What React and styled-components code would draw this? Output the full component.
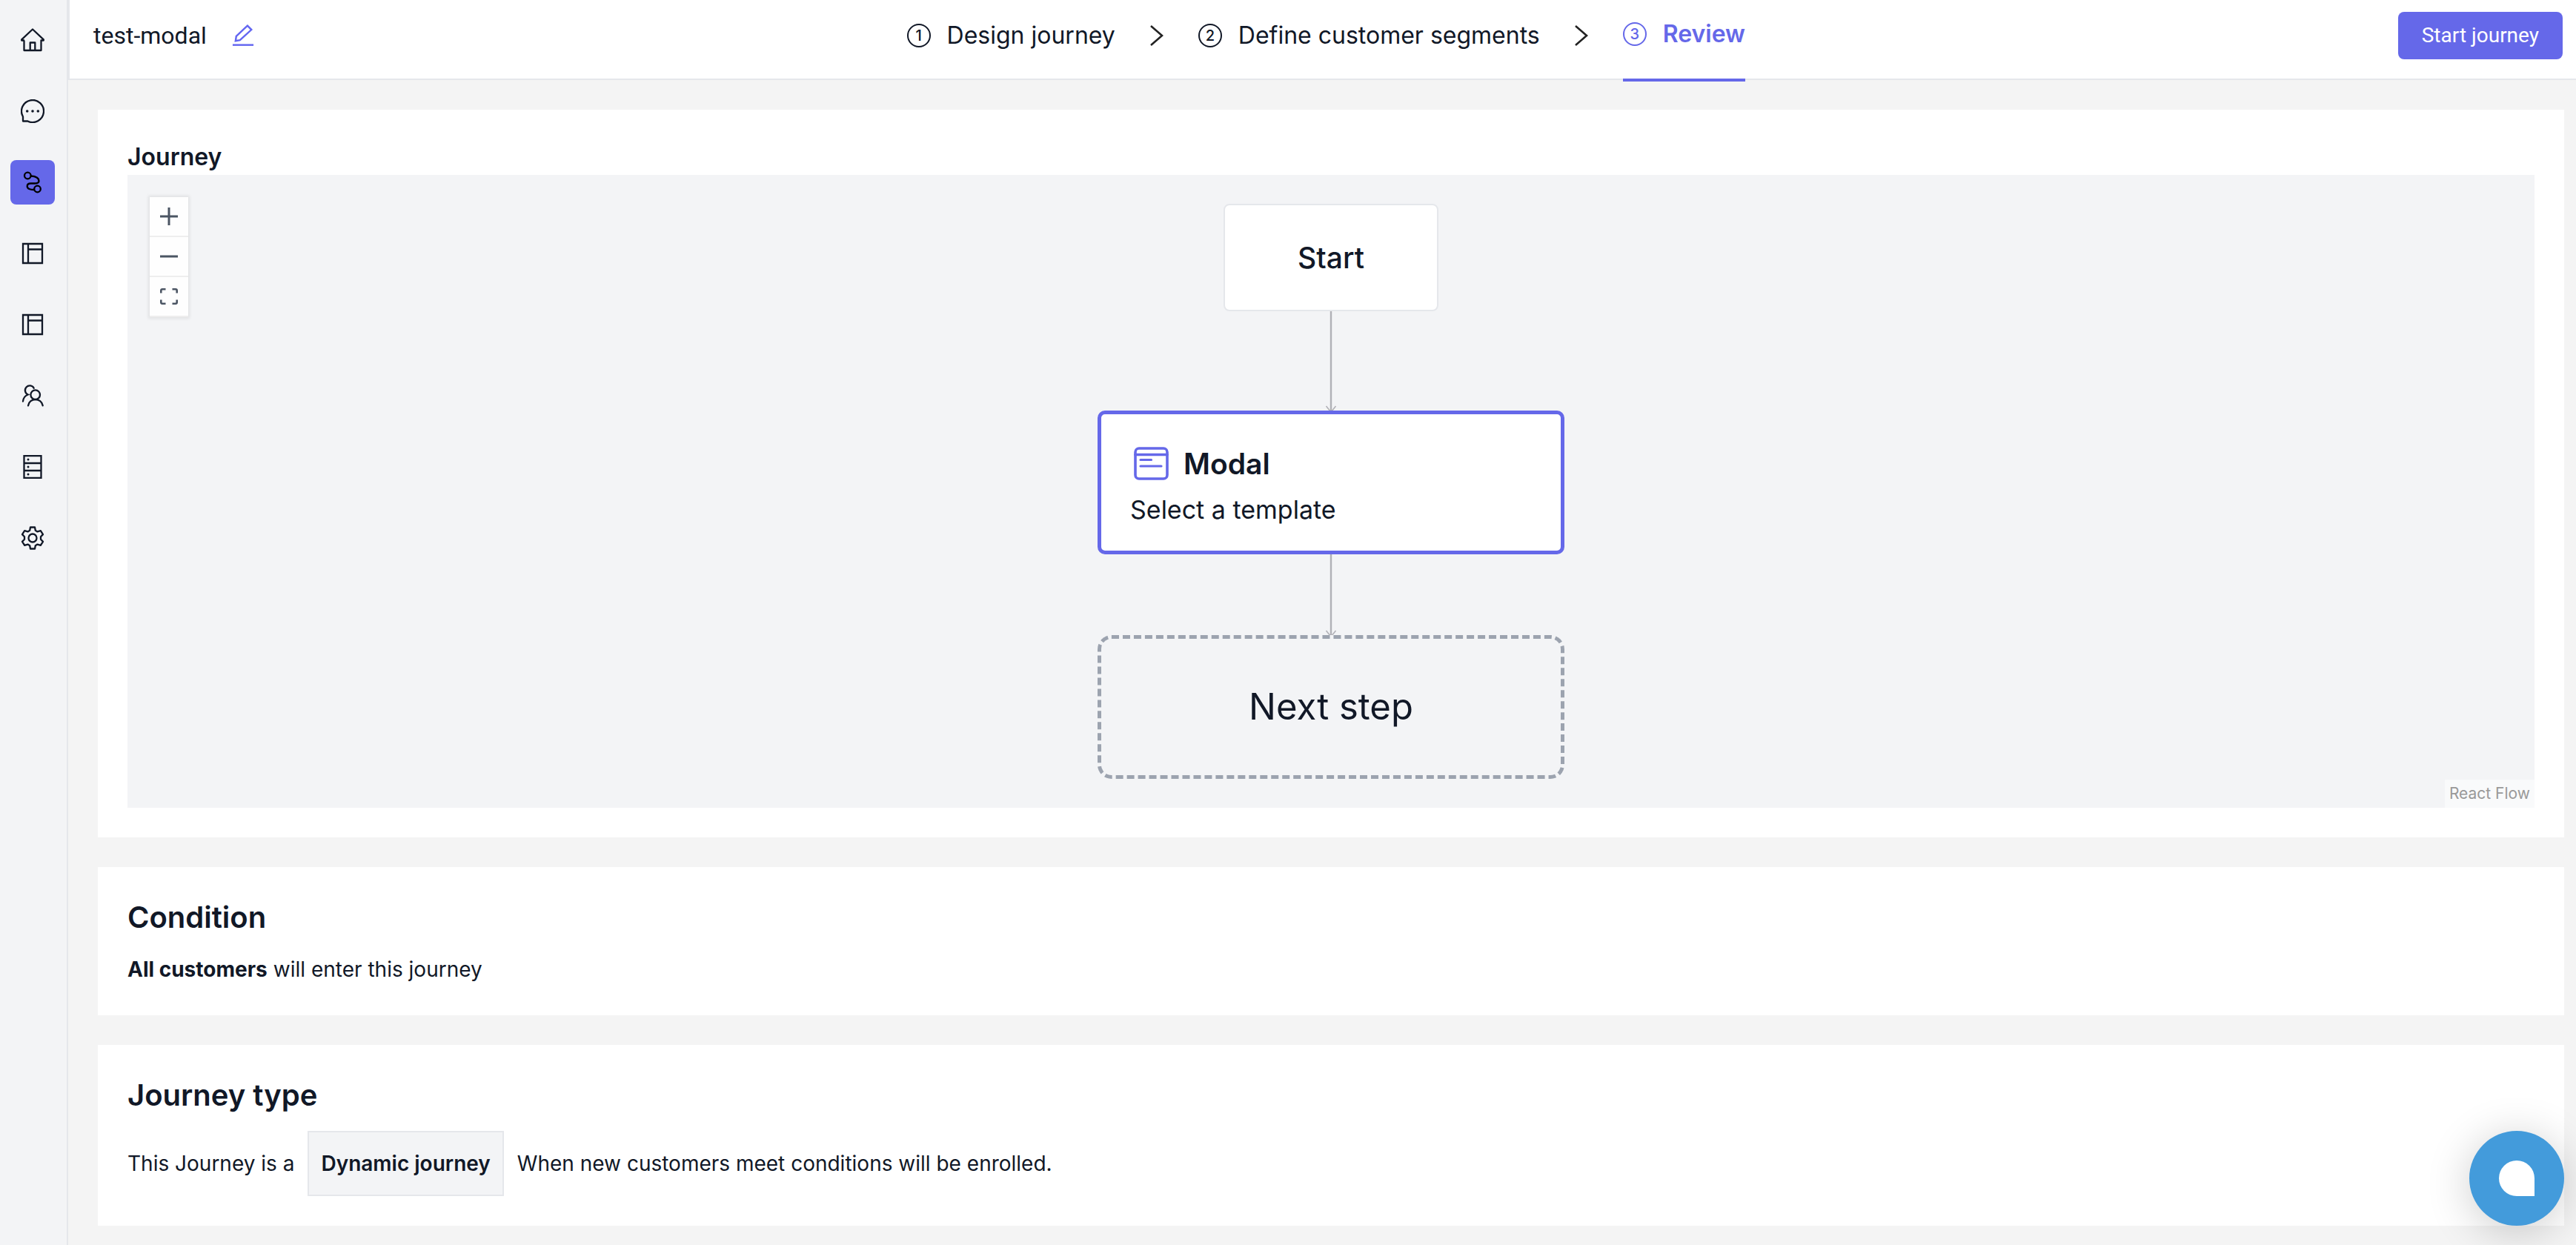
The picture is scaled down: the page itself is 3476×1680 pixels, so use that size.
import React from "react";
import styled, { createGlobalStyle, css } from "styled-components";

const ink = "#111827";
const line = "#e5e7eb";
const accent = "#6366f1";
const brand = "#6568e9";
const mist = "#f3f4f6";

const GlobalStyle = createGlobalStyle`
  *, *::before, *::after { box-sizing: border-box; }
  body {
    margin: 0;
    background: #f4f4f4;
    color: ${ink};
    font-family: Inter, "Liberation Sans", sans-serif;
    font-size: 28px;
    line-height: 44px;
  }
  h1, h2, p, ol { margin: 0; padding: 0; font-weight: inherit; }
  button { font: inherit; color: inherit; border: 0; padding: 0; background: none; cursor: pointer; }
  a { color: inherit; text-decoration: none; }
  svg { display: block; }
`;

const Shell = styled.div`
  display: flex;
  min-height: 100vh;
`;

const Sidebar = styled.nav`
  display: flex;
  flex-direction: column;
  align-items: center;
  gap: 36px;
  width: 92px;
  padding: 24px 2px 24px 0;
  background: ${mist};
  border-right: 2px solid ${line};
`;

const NavLink = styled.a`
  display: grid;
  place-items: center;
  width: 60px;
  height: 60px;
  border-radius: 8px;
  ${(p) => p.$active && css`background: ${brand}; color: #000;`}
`;

const Page = styled.div`
  flex: 1;
  min-width: 0;
`;

const Header = styled.header`
  display: flex;
  justify-content: space-between;
  height: 108px;
  padding: 16px 18px 0 32px;
  background: #fff;
  border-left: 2px solid ${line};
  border-bottom: 2px solid ${line};
`;

const TitleGroup = styled.div`
  display: flex;
  align-items: center;
  gap: 34px;
  height: 64px;
`;

const JourneyName = styled.h1`
  font: 400 32px/48px Roboto, sans-serif;
`;

const EditButton = styled.button`
  color: ${accent};
`;

const Steps = styled.ol`
  display: flex;
  gap: 47px;
  list-style: none;
  font-size: 32px;
  line-height: 48px;
`;

const StepItem = styled.li`
  display: flex;
  gap: 47px;
  height: 94px;
`;

const StepButton = styled.button`
  display: flex;
  align-items: center;
  gap: 22px;
  height: 64px;
  ${(p) =>
    p.$current &&
    css`
      height: 94px;
      padding-bottom: 30px;
      border-bottom: 4px solid ${brand};
      color: ${brand};
      font-weight: 600;
    `}
`;

const StepNumber = styled.span`
  display: grid;
  place-items: center;
  width: 32px;
  height: 32px;
  border: 2px solid currentColor;
  border-radius: 50%;
  font-size: 20px;
  font-weight: 500;
  line-height: 28px;
`;

const Separator = styled.span`
  display: flex;
  align-items: center;
  height: 64px;
`;

const PrimaryButton = styled.button`
  height: 64px;
  padding: 0 32px;
  border-radius: 8px;
  background: ${brand};
  color: #fff;
  font: 400 28px/40px Roboto, sans-serif;
`;

const Main = styled.main`
  display: flex;
  flex-direction: column;
  gap: 40px;
  padding: 40px 16px 26px 40px;
`;

const Panel = styled.section`
  display: flex;
  flex-direction: column;
  gap: ${(p) => (p.$flush ? "0" : "20px")};
  padding: 40px;
  background: #fff;
`;

const PanelTitle = styled.h2`
  font-weight: 600;
  font-size: ${(p) => (p.$small ? "32px" : "40px")};
  line-height: ${(p) => (p.$small ? "48px" : "56px")};
`;

const Sentence = styled.p`
  display: flex;
  align-items: center;
  gap: ${(p) => (p.$wide ? "18px" : "8px")};
`;

const Tag = styled.strong`
  padding: 20px 16px;
  border: 2px solid ${line};
  background: ${mist};
  font-weight: 600;
`;

const Canvas = styled.div`
  position: relative;
  display: flex;
  flex-direction: column;
  align-items: center;
  padding: 39px 0;
  background: ${mist};
`;

const Controls = styled.div`
  position: absolute;
  top: 30px;
  left: 30px;
  box-shadow: 0 0 4px 2px rgba(0, 0, 0, 0.08);
`;

const ControlButton = styled.button`
  display: grid;
  place-items: center;
  width: 52px;
  height: 54px;
  background: #fefefe;
  border-bottom: 2px solid #eee;
  color: #4b5563;
`;

const Attribution = styled.a`
  position: absolute;
  right: 0;
  bottom: 0;
  padding: 4px 6px;
  background: rgba(255, 255, 255, 0.5);
  color: #999;
  font-size: 21px;
  line-height: 30px;
`;

const StartNode = styled.div`
  display: grid;
  place-items: center;
  width: 290px;
  height: 145px;
  border: 2px solid ${line};
  border-radius: 8px;
  background: #fff;
  font-size: 39px;
  font-weight: 500;
`;

const StepNode = styled.div`
  display: flex;
  flex-direction: column;
  justify-content: center;
  gap: 8px;
  width: 630px;
  height: 194px;
  padding: 12px 39px 0;
  border: 5px solid ${brand};
  border-radius: 10px;
  background: #fff;
  font-size: 34px;
  line-height: 54px;
`;

const NodeTitle = styled.div`
  display: flex;
  align-items: center;
  gap: 16px;
  font-size: 39px;
  font-weight: 600;
`;

const NextNode = styled.div`
  display: grid;
  place-items: center;
  width: 630px;
  height: 194px;
  border: 5px dashed #9ca3af;
  border-radius: 19px;
  font-size: 49px;
`;

const ChatButton = styled.button`
  position: fixed;
  right: 16px;
  bottom: 26px;
  display: grid;
  place-items: center;
  width: 128px;
  height: 128px;
  border-radius: 50%;
  background: #439bdb;
  box-shadow: 0 8px 60px rgba(0, 0, 0, 0.2);
`;

const ChatBubble = styled.span`
  width: 48px;
  height: 48px;
  border-radius: 50% 50% 0 50%;
  background: #fff;
`;

const Icon = ({ size = 32, children, ...rest }) => (
  <svg width={size} height={size} viewBox="0 0 32 32" fill="none" stroke="currentColor" strokeWidth="2.3" aria-hidden="true" {...rest}>
    {children}
  </svg>
);

const HomeIcon = () => (
  <Icon strokeLinejoin="round">
    <path d="M5 16.500H1.200v-1.200L16 1.500l14.800 13.800v1.200H27.500V30H4.500V16.500M12.700 30V19.500h6.600V30" />
  </Icon>
);
const ChatIcon = () => (
  <Icon>
    <path d="M3 29.500V23.500A15 15 0 1 1 9.400 29.500Z" strokeLinejoin="round" />
    <g fill="currentColor" stroke="none">
      <circle cx="8.700" cy="16" r="1.800" />
      <circle cx="16" cy="16" r="1.800" />
      <circle cx="23.300" cy="16" r="1.800" />
    </g>
  </Icon>
);
const RouteIcon = () => (
  <Icon>
    <circle cx="9.300" cy="7" r="4.300" />
    <circle cx="22.500" cy="25" r="4.300" />
    <path d="M13.800 7.500C20.500 8 24.500 10.500 24.500 14.200c0 2.500-2 3.300-6 3.300h-5c-3.300 0-4.800 1.200-4.800 3.700 0 3.200 3.500 4.800 9.300 4.800" />
  </Icon>
);
const LayoutIcon = () => (
  <Icon>
    <path d="M3 3h26v26H3zM10 3v26M10 10.500h19" />
  </Icon>
);
const UsersIcon = () => (
  <Icon strokeLinecap="round">
    <circle cx="19.700" cy="14.700" r="6.300" />
    <path d="M10 29.300c1.500-11 18-11 19.700 0M17.700 5.700A6.300 6.300 0 1 0 9.700 14.500C6 16 3.400 19 3 23.500" />
  </Icon>
);
const DatabaseIcon = () => (
  <Icon>
    <path d="M4.500 1.200h23v29.600h-23zM4.500 11h23M4.500 21h23" />
    <g fill="currentColor" stroke="none">
      <circle cx="10" cy="6" r="1.500" />
      <circle cx="10" cy="16" r="1.500" />
      <circle cx="10" cy="26" r="1.500" />
    </g>
  </Icon>
);
const GearIcon = () => (
  <Icon strokeLinejoin="round">
    <circle cx="16" cy="16" r="5.500" />
    <path d="M13 1.500h6l.8 4.300 2.700 1.600 4.300-1.300 3.200 5-3 3.200v3.400l3 3.200-3.200 5-4.300-1.300-2.700 1.600-.8 4.300h-6l-.8-4.300-2.700-1.600-4.300 1.300-3.200-5 3-3.200v-3.400l-3-3.200 3.200-5 4.300 1.300 2.700-1.600z" />
  </Icon>
);
const PencilIcon = () => (
  <Icon size={30} strokeWidth="2.600">
    <path d="M1 29.500h30" />
    <path d="M22.300 1.800l5.700 5.700L11.500 22.500l-6.300 1.300 1-6.800z" />
  </Icon>
);
const ModalIcon = () => (
  <svg width="56" height="48" viewBox="0 0 56 48" fill="none" stroke={brand} strokeWidth="3.600" strokeLinecap="round" aria-hidden="true">
    <rect x="7" y="3" width="43" height="41" rx="5" />
    <path d="M7 11.500h43" />
    <path d="M14 18.500h14.500M14 27h28" strokeWidth="3.200" />
  </svg>
);
const ChevronIcon = () => (
  <svg width="18" height="28" viewBox="0 0 18 28" fill="none" stroke="#222" strokeWidth="2.600" aria-hidden="true">
    <path d="M1 1l15 13L1 27" />
  </svg>
);
const Edge = ({ length }) => (
  <svg width="16" height={length} viewBox={`0 0 16 ${length}`} fill="none" stroke="#b1b1b7" aria-hidden="true">
    <path d={`M8 0v${length}`} strokeWidth="2.400" />
    <path d={`M1.500 ${length - 6}L8 ${length + 2}L14.500 ${length - 6}`} strokeWidth="1.600" />
  </svg>
);

const navItems = [
  ["Home", HomeIcon],
  ["Messages", ChatIcon],
  ["Journeys", RouteIcon],
  ["Templates", LayoutIcon],
  ["Trackers", LayoutIcon],
  ["People", UsersIcon],
  ["Events", DatabaseIcon],
  ["Settings", GearIcon],
];

const steps = ["Design journey", "Define customer segments", "Review"];
const currentStep = 2;

export default function App() {
  return (
    <>
      <GlobalStyle />
      <Shell>
        <Sidebar aria-label="Main">
          {navItems.map(([label, Glyph]) => (
            <NavLink key={label} href="#" aria-label={label} $active={label === "Journeys"}>
              <Glyph />
            </NavLink>
          ))}
        </Sidebar>
        <Page>
          <Header>
            <TitleGroup>
              <JourneyName>test-modal</JourneyName>
              <EditButton type="button" aria-label="Rename journey">
                <PencilIcon />
              </EditButton>
            </TitleGroup>
            <Steps>
              {steps.map((step, i) => (
                <StepItem key={step}>
                  <StepButton type="button" $current={i === currentStep}>
                    <StepNumber>{i + 1}</StepNumber>
                    {step}
                  </StepButton>
                  {i < steps.length - 1 && (
                    <Separator>
                      <ChevronIcon />
                    </Separator>
                  )}
                </StepItem>
              ))}
            </Steps>
            <PrimaryButton type="button">Start journey</PrimaryButton>
          </Header>
          <Main>
            <Panel $flush>
              <PanelTitle $small>Journey</PanelTitle>
              <Canvas>
                <Controls>
                  <ControlButton type="button" aria-label="Zoom in">
                    <svg width="24" height="24" viewBox="0 0 24 24" stroke="currentColor" strokeWidth="3">
                      <path d="M12 0v24M0 12h24" />
                    </svg>
                  </ControlButton>
                  <ControlButton type="button" aria-label="Zoom out">
                    <svg width="24" height="24" viewBox="0 0 24 24" stroke="currentColor" strokeWidth="3">
                      <path d="M0 12h24" />
                    </svg>
                  </ControlButton>
                  <ControlButton type="button" aria-label="Fit view">
                    <svg width="24" height="24" viewBox="0 0 24 24" fill="none" stroke="currentColor" strokeWidth="2.600">
                      <path d="M1.300 7.500V4q0-1.700 1.700-1.700h4.500M16.500 2.300H21q1.700 0 1.700 1.700v3.500M22.700 16.500V20q0 1.700-1.700 1.700h-4.500M7.500 21.700H3q-1.700 0-1.700-1.700v-3.500" />
                    </svg>
                  </ControlButton>
                </Controls>
                <StartNode>Start</StartNode>
                <Edge length={134} />
                <StepNode>
                  <NodeTitle>
                    <ModalIcon />
                    Modal
                  </NodeTitle>
                  <p>Select a template</p>
                </StepNode>
                <Edge length={109} />
                <NextNode>Next step</NextNode>
                <Attribution href="#">React Flow</Attribution>
              </Canvas>
            </Panel>
            <Panel>
              <PanelTitle>Condition</PanelTitle>
              <Sentence>
                <b>All customers</b>
                <span>will enter this journey</span>
              </Sentence>
            </Panel>
            <Panel>
              <PanelTitle>Journey type</PanelTitle>
              <Sentence $wide>
                <span>This Journey is a</span>
                <Tag>Dynamic journey</Tag>
                <span>When new customers meet conditions will be enrolled.</span>
              </Sentence>
            </Panel>
          </Main>
        </Page>
      </Shell>
      <ChatButton type="button" aria-label="Open chat">
        <ChatBubble />
      </ChatButton>
    </>
  );
}
